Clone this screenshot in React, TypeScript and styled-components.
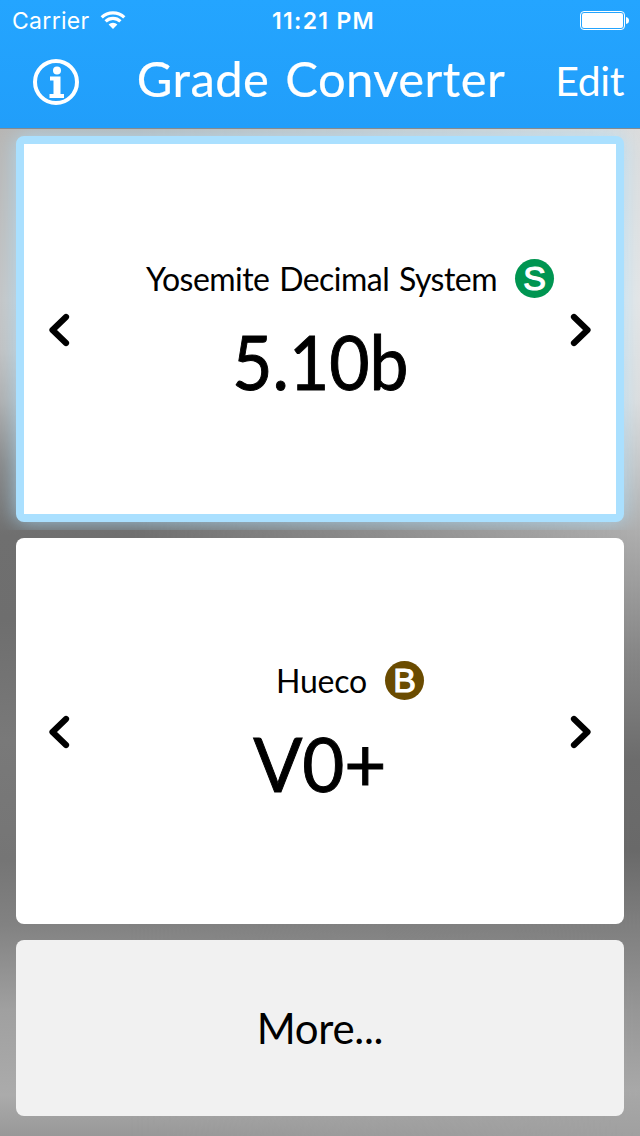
import React from "react";
import styled, { createGlobalStyle } from "styled-components";

const Global = createGlobalStyle`
  * { box-sizing: border-box; }
  body { margin: 0; font-family: Lato, "Open Sans", sans-serif; color: #000; }
`;

const Screen = styled.main`
  position: relative;
  z-index: 0;
  width: 640px;
  height: 1136px;
  display: flex;
  flex-direction: column;
  overflow: hidden;
  background: linear-gradient(#b8b6b4 128px, #c6c6c6 300px, #c2c2c2 350px, #b0b0b0 400px, #888 465px, #6f6f6f 535px, #6e6e6e 620px, #797979 740px, #757575 860px, #828282 925px, #a0a0a0 1010px, #ababab 1095px, #989898 1136px);

  &::before {
    content: "";
    position: absolute;
    inset: 0;
    z-index: -1;
    background: linear-gradient(#dcdcdc 128px, #e6e6e6 300px, #dedede 400px, #c8c8c8 465px, #adadad 535px, #888 650px, #6c6c6c 760px, #696969 850px, #808080 930px, #969696 1010px, #a8a8a8 1090px, #a0a0a0 1136px);
    mask-image: linear-gradient(to right, transparent 20%, #000 100%);
  }
`;

const Header = styled.header`
  height: 128px;
  flex: none;
  display: flex;
  flex-direction: column;
  color: #fff;
  background: linear-gradient(#24a5ff, #219efa);
  box-shadow: 0 1px 0 #858b90;
`;

const StatusBar = styled.div`
  height: 40px;
  display: grid;
  grid-template-columns: 1fr auto 1fr;
  align-items: center;
  padding: 1px 11px 0 12px;
`;

const Carrier = styled.div`
  display: flex;
  align-items: center;
  gap: 10px;
  line-height: 38px;

  svg { margin-top: -1px; }
`;

const Label = styled.span<{ $size: number; $spacing?: number; $words?: number; $stroke?: number }>`
  font-size: ${(p) => p.$size}px;
  letter-spacing: ${(p) => p.$spacing ?? 0}px;
  word-spacing: ${(p) => p.$words ?? 0}px;
  -webkit-text-stroke: ${(p) => p.$stroke ?? 0}px currentColor;
  white-space: nowrap;
`;

const StatusLabel = styled(Label)<{ $weight: number }>`
  font-family: Inter, sans-serif;
  font-weight: ${(p) => p.$weight};
`;

const Clock = styled.div`
  padding-left: 6px;
`;

const Battery = styled.svg`
  justify-self: end;
  margin-top: -1px;
`;

const NavBar = styled.div`
  height: 88px;
  display: grid;
  grid-template-columns: 104px 1fr 104px;
  align-items: center;
  padding: 0 16px;
`;

const InfoButton = styled.button`
  border: 0;
  padding: 0;
  margin: -4px 0 0 16px;
  width: 48px;
  height: 48px;
  background: none;
`;

const Title = styled.h1`
  margin: -6px 0 0 2px;
  text-align: center;
  font-weight: 400;
  line-height: 60px;
`;

const EditButton = styled.button`
  border: 0;
  padding: 0;
  margin-top: -7px;
  background: none;
  color: #fff;
  font-family: inherit;
  text-align: right;
`;

const Cards = styled.section`
  flex: 1;
  display: flex;
  flex-direction: column;
  gap: 16px;
  padding: 8px 16px 20px;
`;

const Card = styled.article<{ $selected?: boolean }>`
  height: 386px;
  display: grid;
  grid-template-columns: 32px 1fr 32px;
  align-items: center;
  padding: ${(p) => (p.$selected ? "0 19px" : "0 27px")};
  border-radius: 8px;
  background: #fff;
  ${(p) =>
    p.$selected &&
    "border: 8px solid #aae0ff; box-shadow: 0 0 20px rgba(170, 224, 255, 0.75); clip-path: inset(-7px -16px -8px);"}
`;

const Arrow = styled.svg`
  display: block;
  margin: 2px auto 0;
`;

const Grade = styled.div`
  display: flex;
  flex-direction: column;
  align-items: center;
`;

const SystemRow = styled.div`
  height: 40px;
  display: flex;
  align-items: center;
  gap: 18px;
  margin: 6px 0 0 60px;
`;

const Badge = styled.span<{ $color: string }>`
  width: 39px;
  height: 39px;
  border-radius: 50%;
  display: grid;
  place-items: center;
  background: ${(p) => p.$color};
  color: #fff;
  font: 400 34px/39px "Liberation Sans", sans-serif;
  -webkit-text-stroke: 1.2px #fff;
`;

const Value = styled.div<{ $stretch: number }>`
  height: 90px;
  margin-top: 17px;
  line-height: 90px;
  transform: scaleX(${(p) => p.$stretch});
`;

const More = styled.button`
  height: 176px;
  border: 0;
  border-radius: 8px;
  background: #f1f1f1;
  color: #000;
  font-family: inherit;
`;

const Chevron = ({ right }: { right?: boolean }) => (
  <Arrow width="24" height="36" viewBox="0 0 24 36">
    <path
      d={right ? "M5 5L18.5 18L5 31" : "M19 5L5.5 18L19 31"}
      fill="none"
      stroke="#000"
      strokeWidth="6.2"
      strokeLinecap="round"
      strokeLinejoin="round"
    />
  </Arrow>
);

type CardProps = {
  name: string;
  nameSpacing: number;
  mark: string;
  color: string;
  value: string;
  stretch: number;
  selected?: boolean;
};

const GradeCard = (p: CardProps) => (
  <Card $selected={p.selected}>
    <Chevron />
    <Grade>
      <SystemRow>
        <Label $size={32} $spacing={p.nameSpacing} $words={2}>{p.name}</Label>
        <Badge $color={p.color}>{p.mark}</Badge>
      </SystemRow>
      <Value $stretch={p.stretch}>
        <Label $size={76} $stroke={1}>{p.value}</Label>
      </Value>
    </Grade>
    <Chevron right />
  </Card>
);

export default function App() {
  return (
    <Screen>
      <Global />
      <Header>
        <StatusBar>
          <Carrier>
            <StatusLabel $size={23} $spacing={0.3} $weight={400}>Carrier</StatusLabel>
            <svg width="26" height="20" viewBox="0 0 26 20">
              <g fill="none" stroke="#fff" strokeWidth="3.2">
                <path d="M1.7 7.4A16.2 16.2 0 0 1 24.3 7.4" />
                <path d="M5.6 11.4A10.6 10.6 0 0 1 20.4 11.4" />
              </g>
              <path d="M13 19L8.6 14.6A6.3 6.3 0 0 1 17.4 14.6Z" fill="#fff" />
            </svg>
          </Carrier>
          <Clock>
            <StatusLabel $size={23} $spacing={1.3} $weight={600}>11:21 PM</StatusLabel>
          </Clock>
          <Battery width="49" height="20" viewBox="0 0 49 20">
            <rect x="0.5" y="1.5" width="44" height="18" rx="3.5" fill="none" stroke="#fff" />
            <rect x="2" y="3" width="41" height="15" rx="2" fill="#fff" />
            <path d="M46 7Q49 7.5 49 10.5T46 14Z" fill="#fff" />
          </Battery>
        </StatusBar>
        <NavBar>
          <InfoButton aria-label="Info">
            <svg width="48" height="48" viewBox="0 0 48 48">
              <circle cx="24" cy="24" r="21" fill="none" stroke="#fff" strokeWidth="4" />
              <circle cx="25" cy="12.5" r="4" fill="#fff" />
              <path d="M18 18.5H28.5V36H32V40H17.5V36H21.5V22.5H18Z" fill="#fff" />
            </svg>
          </InfoButton>
          <Title><Label $size={49} $spacing={0.4} $words={3} $stroke={0.2}>Grade Converter</Label></Title>
          <EditButton><Label $size={41} $spacing={-0.4}>Edit</Label></EditButton>
        </NavBar>
      </Header>
      <Cards>
        <GradeCard selected name="Yosemite Decimal System" nameSpacing={-0.52} mark="S" color="#009551" value="5.10b" stretch={0.915} />
        <GradeCard name="Hueco" nameSpacing={-0.2} mark="B" color="#6a4b00" value="V0+" stretch={0.955} />
        <More><Label $size={42} $spacing={-0.3}>More...</Label></More>
      </Cards>
    </Screen>
  );
}
